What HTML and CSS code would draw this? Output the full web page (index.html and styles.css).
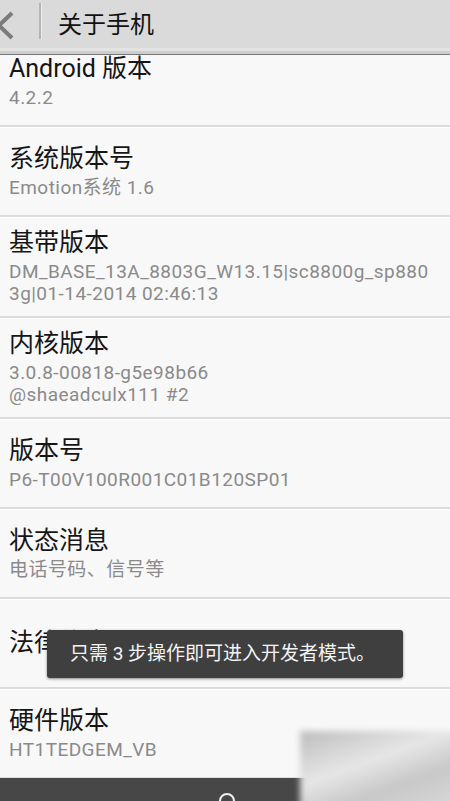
FILE: index.html
```html
<!DOCTYPE html>
<html lang="zh-CN">
<head>
    <meta charset="UTF-8">
    <meta name="viewport" content="width=device-width, initial-scale=1.0">
    <title>关于手机</title>
    <link rel="stylesheet" href="styles.css">
</head>
<body>

<div class="screen">
    <div class="action-bar">
        <div class="back">
            <svg width="20" height="44" viewBox="0 0 20 44">
                <polyline points="15,11 2,23.5 15,36" fill="none" stroke="#7b7b7b" stroke-width="4"/>
            </svg>
        </div>
        <div class="bar-divider"></div>
        <div class="bar-title">关于手机</div>
    </div>
    <div class="bar-edge"></div>

    <div class="list">
        <div class="items">
            <div class="row">
                <div class="title">Android 版本</div>
                <div class="summary">4.2.2</div>
            </div>
            <div class="row">
                <div class="title">系统版本号</div>
                <div class="summary">Emotion系统 1.6</div>
            </div>
            <div class="row">
                <div class="title">基带版本</div>
                <div class="summary">DM_BASE_13A_8803G_W13.15|sc8800g_sp880<br>3g|01-14-2014 02:46:13</div>
            </div>
            <div class="row">
                <div class="title">内核版本</div>
                <div class="summary">3.0.8-00818-g5e98b66<br>@shaeadculx111 #2</div>
            </div>
            <div class="row">
                <div class="title">版本号</div>
                <div class="summary">P6-T00V100R001C01B120SP01</div>
            </div>
            <div class="row">
                <div class="title">状态消息</div>
                <div class="summary">电话号码、信号等</div>
            </div>
            <div class="row">
                <div class="title">法律信息</div>
            </div>
            <div class="row">
                <div class="title">硬件版本</div>
                <div class="summary">HT1TEDGEM_VB</div>
            </div>
        </div>
    </div>

    <div class="nav-bar">
        <span class="nav-dot"></span>
    </div>

    <div class="toast">只需 3 步操作即可进入开发者模式。</div>
    <div class="watermark"></div>
</div>

</body>
</html>
```

FILE: styles.css
```css
body {
    margin: 0;
    background-color: #f8f8f8;
    font-family: Roboto, "Noto Sans CJK SC", sans-serif;
}

.screen {
    position: relative;
    width: 450px;
    height: 801px;
    overflow: hidden;
    display: flex;
    flex-direction: column;
}

.action-bar {
    height: 48px;
    background-color: #dadada;
    display: flex;
    align-items: center;
    flex-shrink: 0;
}

.back {
    width: 40px;
    height: 44px;
    overflow: hidden;
    margin-left: -3px;
}

.bar-divider {
    width: 2px;
    height: 36px;
    margin-left: 2px;
    margin-top: -6px;
    background-color: #b4b4b4;
    border-right: 1px solid #ececec;
}

.bar-title {
    margin-left: 16px;
    margin-top: -4px;
    font-size: 24px;
    color: #111;
}

/* the stripes under the action bar */
.bar-edge {
    height: 7px;
    flex-shrink: 0;
    background: linear-gradient(#e3e3e3 0, #e3e3e3 3px, #cdcdcd 3px, #cdcdcd 6px, #777 6px);
}

.list {
    flex: 1;
    overflow: hidden;
}

.items {
    margin-top: -18px;
}

.row {
    box-sizing: border-box;
    min-height: 90px;
    padding: 11px 9px;
    display: flex;
    flex-direction: column;
    justify-content: center;
    border-bottom: 2px solid #dcdcdc;
    box-shadow: inset 0 1px 0 #ffffff;
}

.title {
    font-size: 25px;
    line-height: 30px;
    color: #151515;
}

.summary {
    margin-top: 3px;
    font-size: 19px;
    line-height: 22px;
    letter-spacing: 0.45px;
    color: #8a8a8a;
}

.nav-bar {
    height: 23px;
    flex-shrink: 0;
    background-color: #474747;
    border-top: 1px solid #dedede;
    position: relative;
}

.nav-dot {
    position: absolute;
    left: 219px;
    top: 15px;
    width: 12px;
    height: 12px;
    border: 2px solid #f0f0f0;
    border-radius: 50%;
}

.toast {
    position: absolute;
    left: 47px;
    top: 630px;
    width: 356px;
    height: 48px;
    box-sizing: border-box;
    padding-left: 23px;
    line-height: 48px;
    font-size: 19px;
    color: #f4f4f4;
    background-color: #3f3f3f;
    border-radius: 3px;
    box-shadow: 0 1px 3px rgba(0, 0, 0, 0.45);
}

.watermark {
    position: absolute;
    left: 300px;
    top: 731px;
    width: 160px;
    height: 80px;
    background: linear-gradient(160deg, #bdbdbd, #e6e6e6 40%, #c8c8c8 65%, #dadada);
    filter: blur(3px);
}
```
